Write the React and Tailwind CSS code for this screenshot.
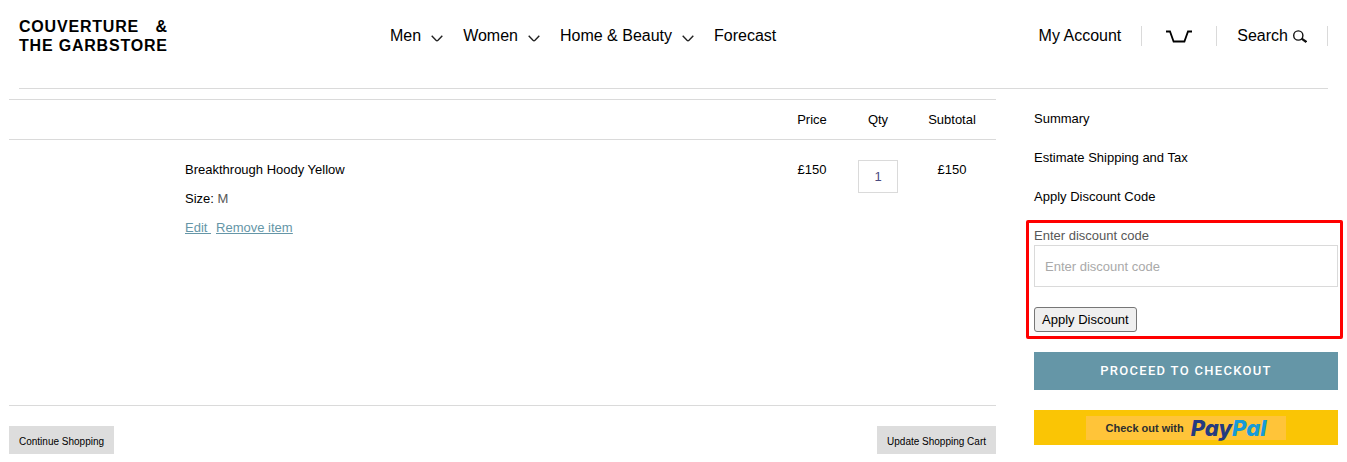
const menu = [
  { name: 'Men', sub: true },
  { name: 'Women', sub: true },
  { name: 'Home & Beauty', sub: true },
  { name: 'Forecast', sub: false },
];

function Chevron() {
  return (
    <svg width="12" height="7" viewBox="0 0 12 7" fill="none" className="mt-1" aria-hidden="true">
      <path d="M0.7 0.7L5 5.2Q6 6.2 7 5.2L11.3 0.7" stroke="#222" strokeWidth="1.4" />
    </svg>
  );
}

function CartIcon() {
  return (
    <svg width="26" height="13" viewBox="0 0 26 13" fill="none" aria-hidden="true">
      <path d="M0 1.5H4L7.6 11.5H18.4L22 1.5H26" stroke="#000" strokeWidth="1.8" />
    </svg>
  );
}

function SearchIcon() {
  return (
    <svg width="14" height="13" viewBox="0 0 14 13" fill="none" className="shrink-0" aria-hidden="true">
      <circle cx="5.3" cy="5.5" r="4.6" stroke="#111" strokeWidth="1.4" />
      <path d="M8.6 8.6L13.4 12" stroke="#111" strokeWidth="2.2" />
    </svg>
  );
}

function Header() {
  return (
    <header className="mx-[10px] flex items-center border-b border-[#dadada] pt-[17px] pb-[33px] text-base">
      <div className="flex w-[371px] shrink-0">
        <a href="#" className="text-base leading-[19px] font-bold tracking-wider">
          <span className="flex justify-between">
            <span>COUVERTURE</span>
            <span>&amp;</span>
          </span>
          <span className="block">THE GARBSTORE</span>
        </a>
      </div>
      <nav className="flex flex-1 gap-5 leading-5">
        {menu.map((item) => (
          <a key={item.name} href="#" className="flex items-center gap-[10px] whitespace-nowrap">
            {item.name}
            {item.sub && <Chevron />}
          </a>
        ))}
      </nav>
      <div className="flex leading-5">
        <a href="#" className="border-r border-[#dadada] pr-5">My Account</a>
        <a href="#" aria-label="Cart" className="flex items-center border-r border-[#dadada] px-6">
          <CartIcon />
        </a>
        <button className="flex items-center gap-[5px] border-r border-[#dadada] px-5">
          Search
          <SearchIcon />
        </button>
      </div>
    </header>
  );
}

function Cart() {
  return (
    <main className="flex-1">
      <table className="w-full border-y border-[#dadada]">
        <thead>
          <tr className="h-10 border-b border-[#dadada]">
            <th className="w-[176px]"></th>
            <th></th>
            <th className="w-[72px] font-normal">Price</th>
            <th className="w-[60px] font-normal">Qty</th>
            <th className="w-[88px] font-normal">Subtotal</th>
          </tr>
        </thead>
        <tbody>
          <tr className="h-[266px] text-center align-top">
            <td></td>
            <td className="pt-[21px] text-left">
              <a href="#">Breakthrough Hoody Yellow</a>
              <p className="mt-[11px]">Size: <span className="text-[#575757]">M</span></p>
              <p className="mt-[11px] flex gap-[5px] text-[#6596a7] underline">
                <a href="#" className="whitespace-pre">{'Edit '}</a>
                <a href="#">Remove item</a>
              </p>
            </td>
            <td className="pt-[21px]">£150</td>
            <td className="pt-5">
              <input
                type="text"
                defaultValue="1"
                aria-label="Qty"
                className="h-[33px] w-10 border border-[#dadada] text-center text-[#4b4b80]"
              />
            </td>
            <td className="pt-[21px]">£150</td>
          </tr>
        </tbody>
      </table>
      <div className="mt-5 flex justify-between text-[10px]">
        <button className="h-7 bg-[#dddddd] px-[10px] pt-[3px]">Continue Shopping</button>
        <button className="h-7 bg-[#dddddd] px-[10px] pt-[3px]">Update Shopping Cart</button>
      </div>
    </main>
  );
}

function Summary() {
  return (
    <aside className="w-[304px] shrink-0 pt-[11px]">
      <h2>Summary</h2>
      <h2 className="mt-[21px]">Estimate Shipping and Tax</h2>
      <h2 className="mt-[21px]">Apply Discount Code</h2>

      <form className="relative mt-[21px]">
        <label htmlFor="coupon" className="block text-[#575757]">Enter discount code</label>
        <input
          id="coupon"
          type="text"
          placeholder="Enter discount code"
          className="block h-[42px] w-full border border-[#dadada] px-[10px] placeholder:text-[#a9a9a9]"
        />
        <button type="button" className="mt-5 block h-[25px] rounded-[3px] border border-[#767676] bg-[#efefef] px-[7px]">
          Apply Discount
        </button>
        <div className="pointer-events-none absolute -top-[7px] -right-[5px] -bottom-[7px] -left-2 rounded-xs border-3 border-[#ff0000]"></div>
      </form>

      <button className="mt-5 h-[38px] w-full bg-[#6596a7] font-['Roboto',sans-serif] font-medium tracking-widest text-white">
        PROCEED TO CHECKOUT
      </button>
      <button className="mt-5 flex h-[35px] w-full items-center justify-center bg-[#fac505]">
        <span className="flex h-6 w-[200px] items-center justify-center gap-[7px] bg-[#ffc439]">
          <span className="text-[11px] font-bold text-[#2c2e2f]">Check out with</span>
          <span className="font-['Inter',sans-serif] text-[22px] leading-6 font-extrabold text-[#253b80] italic">
            Pay<span className="text-[#179bd7]">Pal</span>
          </span>
        </span>
      </button>
    </aside>
  );
}

export default function App() {
  return (
    <div className="min-h-screen bg-white px-[9px] font-['Liberation_Sans',Arial,sans-serif] text-[13px] leading-[18px] text-black">
      <Header />
      <div className="mt-[10px] flex gap-[38px]">
        <Cart />
        <Summary />
      </div>
    </div>
  );
}
